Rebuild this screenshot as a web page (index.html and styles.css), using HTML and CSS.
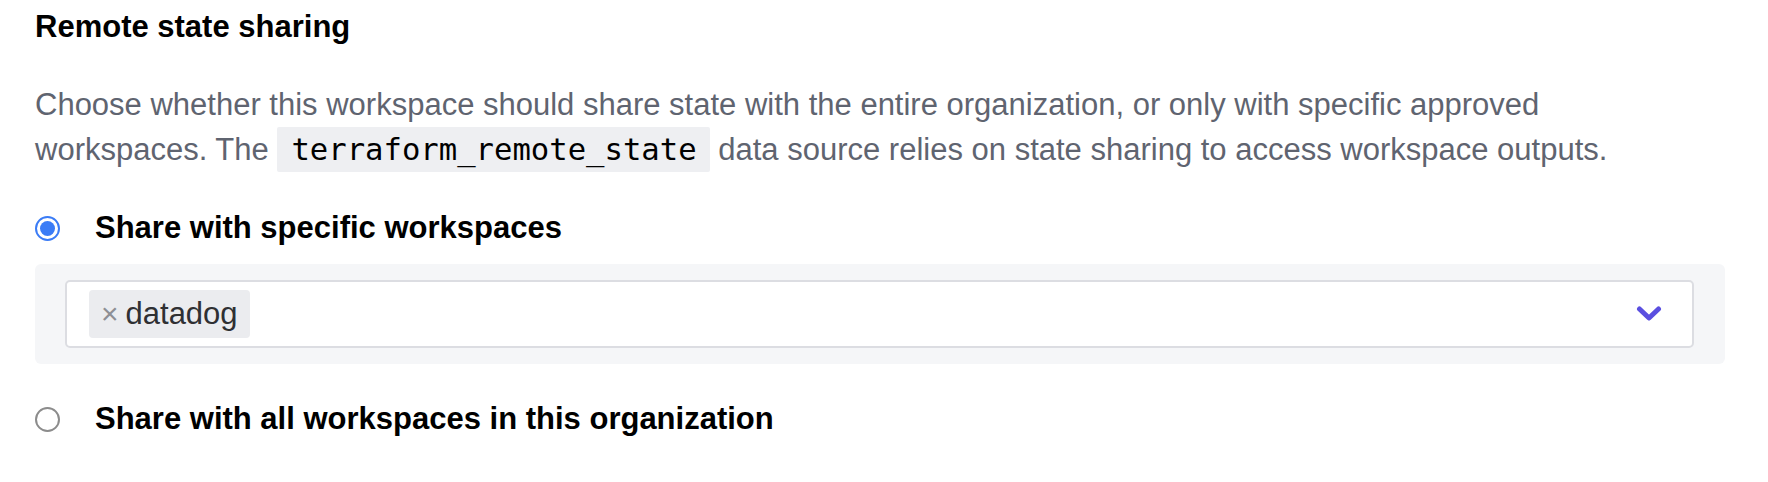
FILE: index.html
```html
<!DOCTYPE html>
<html lang="en">
<head>
<meta charset="utf-8">
<title>Remote state sharing</title>
<link rel="stylesheet" href="styles.css">
</head>
<body>
<section class="section">
  <h2 class="title">Remote state sharing</h2>
  <p class="desc"><span class="desc-line">Choose whether this workspace should share state with the entire organization, or only with specific approved</span> <span class="desc-line">workspaces. The</span> <code class="code">terraform_remote_state</code> <span class="desc-line">data source relies on state sharing to access workspace outputs.</span></p>

  <label class="option">
    <span class="radio radio-checked"></span>
    <span class="option-label">Share with specific workspaces</span>
  </label>

  <div class="panel">
    <div class="select">
      <span class="tag"><span class="tag-x">×</span><span class="tag-text">datadog</span></span>
      <svg class="chevron" width="26" height="18" viewBox="0 0 26 18" aria-hidden="true">
        <path d="M3.5 4 L13 13 L22.5 4" fill="none" stroke="#5a4fe0" stroke-width="5" stroke-linecap="round" stroke-linejoin="round"/>
      </svg>
    </div>
  </div>

  <label class="option option-last">
    <span class="radio"></span>
    <span class="option-label">Share with all workspaces in this organization</span>
  </label>
</section>
</body>
</html>
```

FILE: styles.css
```css
* { box-sizing: border-box; }

html, body {
  margin: 0;
  padding: 0;
  background: #ffffff;
}

body {
  font-family: "Liberation Sans", Arial, Helvetica, sans-serif;
  color: #000000;
}

.section {
  padding: 9px 43px 0 35px;
}

.title {
  margin: 0;
  font-size: 31px;
  line-height: 36px;
  font-weight: 700;
  color: #000000;
}

.desc {
  margin: 37px 0 0 0;
  font-size: 31px;
  line-height: 45px;
  color: #5f6470;
  max-width: 1625px;
}

.code {
  display: inline-block;
  vertical-align: top;
  line-height: 45px;
  font-family: "DejaVu Sans Mono", "Liberation Mono", monospace;
  font-size: 30.6px;
  color: #000000;
  background: #eeeff2;
  padding: 0 13px 0 14px;
  border-radius: 2px;
}

.option {
  display: flex;
  align-items: center;
  height: 36px;
  margin-top: 38px;
}

.option-last {
  margin-top: 37px;
}

.radio {
  width: 25px;
  height: 25px;
  border-radius: 50%;
  border: 2px solid #8c8c8c;
  background: #ffffff;
  flex: 0 0 auto;
  position: relative;
}

.radio-checked {
  border: 2.5px solid #3b7cf6;
}

.radio-checked::after {
  content: "";
  position: absolute;
  left: 3px;
  top: 3px;
  right: 3px;
  bottom: 3px;
  border-radius: 50%;
  background: #3b7cf6;
}

.option-label {
  margin-left: 35px;
  font-size: 31px;
  font-weight: 700;
  color: #000000;
}

.panel {
  margin-top: 18px;
  background: #f5f6f8;
  border-radius: 6px;
  padding: 16px 31px 16px 30px;
}

.select {
  display: flex;
  align-items: center;
  justify-content: space-between;
  height: 68px;
  background: #ffffff;
  border: 2px solid #dcdde2;
  border-radius: 5px;
  padding: 0 30px 0 22px;
}

.tag {
  display: flex;
  align-items: center;
  height: 48px;
  padding: 0 12px 0 12px;
  background: #ebecef;
  border-radius: 4px;
  font-size: 31px;
  color: #2f3033;
}

.tag-x {
  color: #8e8f94;
  font-size: 30px;
  margin-right: 7px;
}

.chevron {
  display: block;
}
```
